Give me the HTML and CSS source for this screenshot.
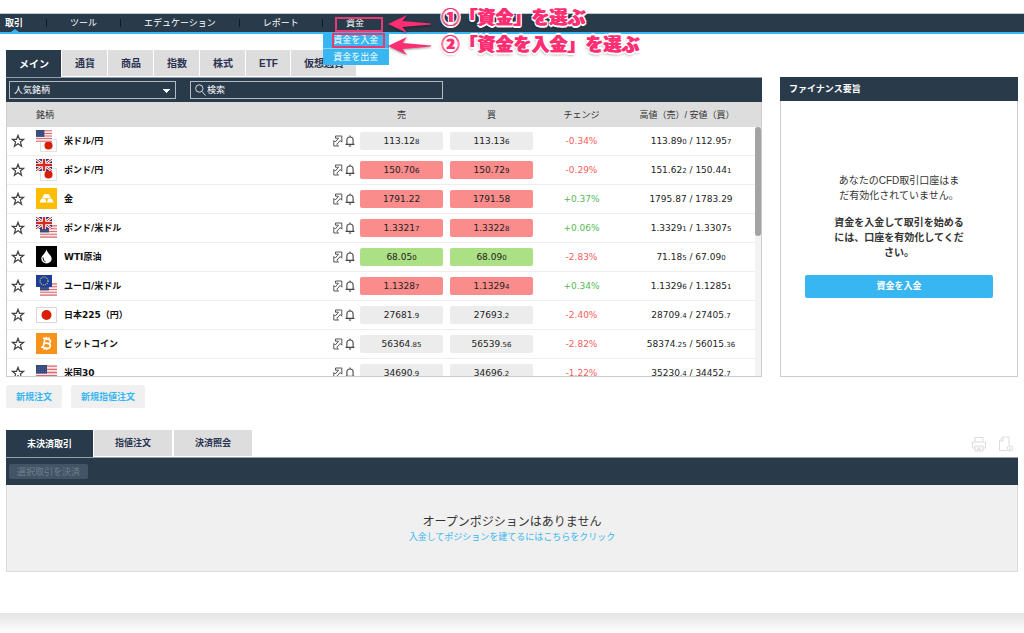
FILE: index.html
```
<!DOCTYPE html>
<html lang="ja">
<head>
<meta charset="utf-8">
<title>取引</title>
<link rel="stylesheet" href="styles.css">
</head>
<body>
<svg class="defs" aria-hidden="true">
  <defs>
    <symbol id="star" viewBox="0 0 14 14"><path d="M7 1.3 8.5 5.3H12.7L9.4 8 10.6 12.3 7 9.8 3.4 12.3 4.6 8 1.3 5.3H5.5Z" fill="none" stroke="#444" stroke-width="1.2"/></symbol>
    <symbol id="expand" viewBox="0 0 10 12"><path d="M2.500 1H8.800V7.200L7.200 5.500 3.800 9.400 5.500 11H.8V5.500L2.300 7 5.500 3.200H2.500Z" fill="none" stroke="#444" stroke-width=".9"/></symbol>
    <symbol id="bell" viewBox="0 0 10 12"><path d="M.6 9.4H9.4M1.9 9.2V5C1.9 1 8.1 1 8.1 5V9.2M5 .4V2M4 10.6Q5 11.8 6 10.6" fill="none" stroke="#444" stroke-width="1.1"/></symbol>
    <symbol id="us" viewBox="0 0 21 14" preserveAspectRatio="none"><path fill="#f8e8e8" d="M0 0h21v14H0z"/><path d="M0 1h21M0 4h21M0 7h21M0 10h21M0 13h21" stroke="#dc6b73" stroke-width="1.2"/><path fill="#34477c" d="M0 0h11v8H0z"/><path d="M1 2h10M1 4h10M1 6h10" stroke="#6d7ba4" stroke-width=".6" stroke-dasharray="1 1"/></symbol>
    <symbol id="jp" viewBox="0 0 21 16" preserveAspectRatio="none"><path fill="#fff" stroke="#d8d8d8" d="M.5.5h20v15H.5z"/><ellipse cx="10.5" cy="8" rx="5" ry="5" fill="#d81e05"/></symbol>
    <symbol id="uk" viewBox="0 0 16 12"><path fill="#252d83" d="M0 0h16v12H0z"/><path d="m0 0 16 12M16 0 0 12" stroke="#fff" stroke-width="2.8"/><path d="m0 0 16 12M16 0 0 12" stroke="#d52b1e" stroke-width="1"/><path d="M8 0v12M0 6h16" stroke="#fff" stroke-width="4.2"/><path d="M8 0v12M0 6h16" stroke="#d52b1e" stroke-width="2.4"/></symbol>
    <symbol id="eu" viewBox="0 0 16 12"><path fill="#1c3d9c" d="M0 0h16v12H0z"/><circle cx="8" cy="6" r="4" fill="none" stroke="#d8ce45" stroke-width="1.2" stroke-dasharray="1.1 1"/></symbol>
    <symbol id="f-usdjpy" viewBox="0 0 21 22"><use href="#jp" x="4" y="9" width="17" height="13"/><use href="#us" width="16" height="12"/></symbol>
    <symbol id="f-gbpjpy" viewBox="0 0 21 22"><use href="#jp" x="4" y="9" width="17" height="13"/><use href="#uk" width="16" height="12"/></symbol>
    <symbol id="f-gbpusd" viewBox="0 0 21 22"><use href="#us" x="4" y="8" width="17" height="13"/><use href="#uk" width="16" height="12"/></symbol>
    <symbol id="f-eurusd" viewBox="0 0 21 22"><use href="#us" x="4" y="8" width="17" height="13"/><use href="#eu" width="16" height="12"/></symbol>
    <symbol id="f-gold" viewBox="0 0 21 22"><path fill="#fdbd04" d="M0 0h21v21H0z"/><path d="M8 6.2h5l2 4H6.200zM5.200 10.800h4l1.500 3.700H3.500zM12 10.800h4l1.600 3.700h-6.600z" fill="#fff"/></symbol>
    <symbol id="f-oil" viewBox="0 0 21 22"><path d="M0 0h21v21H0z"/><path d="M10.500 3.500C9.700 7 5.300 9.500 5.300 12.800a5.200 4.700 0 0 0 10.400 0C15.700 9.500 11.300 7 10.500 3.500z" fill="#fff"/><path d="M7 11.500q-.3 3.500 2.500 4.300" fill="none" stroke="#000" stroke-width="1"/></symbol>
    <symbol id="f-jp" viewBox="0 0 21 22"><use href="#jp" y="3" width="21" height="16"/></symbol>
    <symbol id="f-us" viewBox="0 0 21 22"><use href="#us" y="3" width="21" height="15"/></symbol>
    <symbol id="f-btc" viewBox="0 0 21 22"><path fill="#f7931a" d="M0 0h21v21H0z"/><g transform="rotate(12 10.500 10.500)"><path d="M6 6h5.500c3.300 0 3.300 4.200 0 4.200H8.500h3.500c3.700 0 3.700 4.800 0 4.800H6M8 6v9M9.300 4v2M11.800 4v2M9.300 15v2M11.800 15v2" fill="none" stroke="#fff" stroke-width="1.700"/></g></symbol>
  </defs>
</svg>

<nav class="nav">
  <ul class="nav-list">
    <li class="nav-item marked"><a href="#"><b>取引</b></a></li>
    <li class="nav-item"><a href="#">ツール</a></li>
    <li class="nav-item"><a href="#">エデュケーション</a></li>
    <li class="nav-item"><a href="#">レポート</a></li>
    <li class="nav-item marked funds"><a href="#">資金</a>
      <ul class="submenu">
        <li><a href="#">資金を入金</a></li>
        <li><a href="#">資金を出金</a></li>
      </ul>
    </li>
  </ul>
</nav>

<main>
  <div class="top">
    <section class="market">
      <div class="tabs">
        <button class="tab active">メイン</button>
        <button class="tab">通貨</button>
        <button class="tab">商品</button>
        <button class="tab">指数</button>
        <button class="tab">株式</button>
        <button class="tab">ETF</button>
        <button class="tab">仮想通貨</button>
      </div>
      <div class="toolbar">
        <select class="field picker" aria-label="銘柄グループ"><option>人気銘柄</option></select>
        <label class="field search">
          <svg width="11" height="12" viewBox="0 0 11 12"><path d="M7 7.500 10.500 11.500M8 4.500a3.700 3.700 0 1 1-7.400 0a3.700 3.700 0 0 1 7.400 0z" fill="none" stroke="#d5dade" stroke-width="1"/></svg>
          <input type="text" placeholder="検索" aria-label="検索">
        </label>
      </div>
      <div class="quotes">
        <table>
          <colgroup><col class="c-star"><col class="c-flag"><col><col class="c-tools"><col class="c-price"><col class="c-price"><col class="c-change"><col class="c-range"></colgroup>
          <thead><tr><th></th><th class="left" colspan="2">銘柄</th><th></th><th class="price">売</th><th class="price">買</th><th>チェンジ</th><th class="range">高値（売）/ 安値（買）</th></tr></thead>
          <tbody id="rows"></tbody>
        </table>
        <span class="scrollbar"><span class="thumb"></span></span>
      </div>
    </section>

    <aside class="finance">
      <h2>ファイナンス要旨</h2>
      <div class="finance-body">
        <p class="notice">あなたのCFD取引口座はまだ有効化されていません。</p>
        <p class="prompt">資金を入金して取引を始めるには、口座を有効化してください。</p>
        <button class="deposit">資金を入金</button>
      </div>
    </aside>
  </div>

  <div class="orders">
    <button>新規注文</button>
    <button>新規指値注文</button>
  </div>

  <section class="positions">
    <div class="positions-head">
      <div class="tabs small">
        <button class="tab active">未決済取引</button>
        <button class="tab">指値注文</button>
        <button class="tab">決済照会</button>
      </div>
      <div class="exports">
        <button aria-label="印刷"><svg width="16" height="16" viewBox="0 0 16 16"><path d="M4 6V1.500h8V6M4 12H1.500V6h13v6H12M4 10h8v5H4zM6 12h4M6 13.500h4" fill="none" stroke="#dcdcdc"/></svg></button>
        <button aria-label="書き出し"><svg width="16" height="16" viewBox="0 0 16 16"><path d="M11 9V1H5L1.500 5v9.500H8.500M5 1v4H1.500" fill="none" stroke="#dcdcdc"/><circle cx="12" cy="12.500" r="2.800" fill="#fff" stroke="#dcdcdc"/><path d="M12 11v3M11 13l1 1 1-1" fill="none" stroke="#dcdcdc"/></svg></button>
      </div>
    </div>
    <div class="positions-bar"><button disabled>選択取引を決済</button></div>
    <div class="empty">
      <p>オープンポジションはありません</p>
      <a href="#">入金してポジションを建てるにはこちらをクリック</a>
    </div>
  </section>
</main>
<footer class="footer"></footer>

<div class="notes">
  <span class="frame frame-1"></span>
  <span class="frame frame-2"></span>
  <svg class="arrow arrow-1" width="44" height="20" viewBox="0 0 44 20"><path d="M0 10 19 1 14.500 7 43 9.500V10.500L14.500 13 19 19Z"/></svg>
  <svg class="arrow arrow-2" width="44" height="20" viewBox="0 0 44 20"><path d="M0 10 19 1 14.500 7 43 9.500V10.500L14.500 13 19 19Z"/></svg>
  <span class="step step-1">①「資金」を選ぶ</span>
  <span class="step step-2">②「資金を入金」を選ぶ</span>
</div>
<script src="quotes.js"></script>
</body>
</html>
```

FILE: styles.css
```
* { box-sizing: border-box; }
body {
  margin: 0;
  padding-top: 13px;
  background: #fff;
  color: #333;
  font-family: "Liberation Sans", "Noto Sans CJK JP", sans-serif;
  font-size: 9px;
  line-height: 12px;
}
button, input, select { font: inherit; color: inherit; border: 0; padding: 0; margin: 0; }
button { cursor: pointer; }
a { color: inherit; text-decoration: none; }
ul { list-style: none; margin: 0; padding: 0; }
p, h2 { margin: 0; }
.defs { position: absolute; width: 0; height: 0; }

.nav {
  background: #293a4b;
  border-top: 1px solid #c4c9cc;
  border-bottom: 2px solid #38b6f1;
  color: #fff;
}
.nav-list { display: flex; }
.nav-item {
  position: relative;
  display: flex;
  align-items: center;
  height: 18px;
}
.nav-item > a { padding: 0 23px; }
.nav-item:first-child > a { padding-left: 5px; }
.nav-item + .nav-item::before { content: ""; width: 1px; height: 8px; background: #101a24; }
.marked::after {
  content: "";
  position: absolute;
  bottom: 0;
  left: 11px;
  border: 4px solid transparent;
  border-top: 0;
  border-bottom: 3px solid #38b6f1;
}
.funds::after { left: 32px; }
.submenu {
  position: absolute;
  z-index: 2;
  top: 18px;
  left: 1px;
  width: 66px;
  background: #38b6f1;
  text-align: center;
}
.submenu li { padding: 2px 0; }
.submenu li + li { border-top: 1px solid #8bd2f3; }

main { padding: 16px 6px 0; }
.top { display: grid; grid-template-columns: minmax(0, 1fr) 238px; gap: 18px; }
.tabs { display: flex; align-items: flex-start; }
.tab {
  height: 26px;
  padding: 2px 12px 0 13px;
  background: #ddd;
  border-right: 1px solid #fff;
  color: #2a3352;
  font-size: 10px;
  font-weight: bold;
}
.tab.active { height: 27px; background: #293a4b; color: #fff; }
.toolbar {
  display: flex;
  gap: 14px;
  padding: 3px;
  background: #293a4b;
  border-top: 1px solid #94a0aa;
}
.field {
  height: 18px;
  border: 1px solid #b3bac1;
  background: #293a4b;
  color: #fff;
}
.picker {
  width: 167px;
  padding: 0 4px;
  appearance: none;
  border-radius: 0;
  background-image: conic-gradient(from 315deg at 50% 100%, #fff 90deg, transparent 0);
  background-repeat: no-repeat;
  background-position: right 5px top 7px;
  background-size: 7px 4px;
}
.search { display: flex; align-items: center; gap: 1px; width: 253px; padding: 0 4px; }
.search input { flex: 1; min-width: 0; background: none; outline: 0; }
.search input::placeholder { color: #fff; opacity: 1; }

.quotes {
  position: relative;
  height: 275px;
  overflow: hidden;
  border: 1px solid #ccc;
  border-top: 0;
}
table { width: 100%; table-layout: fixed; border-collapse: separate; border-spacing: 0; }
.c-star { width: 22px; }
.c-flag { width: 35px; }
.c-tools { width: 29px; }
.c-price { width: 90px; }
.c-change { width: 83px; }
.c-range { width: 138px; }
th { height: 25px; padding: 0; background: #ddd; font-weight: normal; }
td { height: 29px; padding: 0; border-bottom: 1px solid #eee; text-align: center; }
th.left { padding-left: 7px; text-align: left; }
th.price, td.price { padding-right: 7px; }
th.range { padding-right: 10px; white-space: nowrap; }
td svg, td button { display: block; }
td.flag { padding-left: 7px; }
.star { margin: 0 auto; background: none; }
.name { color: #111; font-family: "DejaVu Sans", "Noto Sans CJK JP", sans-serif; font-weight: bold; text-align: left; }
.tools { display: flex; gap: 2px; padding-left: 2px; }
.tools button { background: none; }
.quote, td.change, td.range { font-family: "DejaVu Sans", sans-serif; }
td.range { padding-right: 2px; color: #222; }
.quote { width: 100%; height: 18px; border-radius: 2px; background: #ececec; color: #222; }
.quote.down { background: #fa8c8c; }
.quote.up { background: #abe084; }
small { font-size: 7px; }
.neg { color: #fb5c5c; }
.pos { color: #55b955; }
.scrollbar { position: absolute; top: 25px; right: 0; bottom: 0; width: 6px; background: #f3f3f3; }
.thumb { display: block; height: 109px; border-radius: 3px; background: #a3a3a3; }

.finance { display: flex; flex-direction: column; margin-top: 27px; border: 1px solid #ccc; border-top: 0; }
.finance h2 {
  margin: 0 -1px;
  padding: 6px 9px;
  background: #293a4b;
  color: #fff;
  font-size: 9px;
  line-height: 12px;
}
.finance-body { padding: 72px 24px 0; text-align: center; font-size: 10px; line-height: 15px; }
.notice { width: 126px; margin: 0 auto 12px; }
.prompt { width: 132px; margin: 0 auto 15px; font-weight: bold; }
.deposit {
  display: block;
  width: 100%;
  height: 23px;
  border-radius: 2px;
  background: #38b6f1;
  color: #fff;
  font-size: 9px;
  font-weight: bold;
}

.orders { display: flex; gap: 9px; margin-top: 8px; }
.orders button {
  height: 23px;
  padding: 0 10px;
  border-radius: 2px;
  background: #f0f0f0;
  color: #38b6f1;
  font-weight: bold;
}
.positions { margin-top: 22px; }
.positions-head { display: flex; justify-content: space-between; }
.small .tab { padding: 0 21px; border-right-width: 2px; font-size: 9px; }
.small .tab.active { border-right-width: 1px; }
.exports { display: flex; gap: 11px; padding: 6px 4px 0 0; }
.exports button { height: 16px; background: none; }
.positions-bar { padding: 6px 3px; background: #293a4b; border-top: 1px solid #94a0aa; }
.positions-bar button {
  display: block;
  height: 15px;
  padding: 0 8px;
  border-radius: 2px;
  background: #435466;
  color: #6f7f8d;
}
.empty {
  padding: 28px 0;
  border: 1px solid #ddd;
  border-top: 0;
  background: #f0f0f0;
  text-align: center;
}
.empty p { font-size: 12px; line-height: 18px; }
.empty a { color: #38b6f1; }
.footer { height: 20px; margin-top: 41px; background: linear-gradient(#e4e4e4, #fff); }

.notes { position: absolute; z-index: 3; top: 0; left: 0; pointer-events: none; }
.frame { position: absolute; border: 2px solid #e83a72; }
.frame-1 { top: 17px; left: 335px; width: 48px; height: 15px; }
.frame-2 { top: 33px; left: 332px; width: 53px; height: 15px; }
.arrow { position: absolute; fill: #ff2d72; filter: drop-shadow(0 1px 1px #0006); }
.arrow-1 { top: 14px; left: 388px; }
.arrow-2 { top: 36px; left: 388px; }
.step {
  position: absolute;
  left: 441px;
  color: #ff2d72;
  font: 900 18px/24px "Noto Sans CJK JP", sans-serif;
  white-space: nowrap;
  text-shadow:
    1px 0 0 #ff2d72,
    2px 1px 0 #fff, -1px -1px 0 #fff, 2px -1px 0 #fff, -1px 1px 0 #fff,
    0 2px 0 #fff, 1px 2px 0 #fff, 0 -2px 0 #fff, 1px -2px 0 #fff,
    0 2px 3px #0009;
}
.step-1 { top: 4px; }
.step-2 { top: 31px; }
```

FILE: quotes.js
```
// flag, name, direction, sell, buy, change, high, low; "_" starts the small digits
const quotes = [
  ["usdjpy", "米ドル/円", "", "113.12_8", "113.13_6", "-0.34%", "113.89_0", "112.95_7"],
  ["gbpjpy", "ポンド/円", "down", "150.70_6", "150.72_9", "-0.29%", "151.62_2", "150.44_1"],
  ["gold", "金", "down", "1791.22", "1791.58", "+0.37%", "1795.87", "1783.29"],
  ["gbpusd", "ポンド/米ドル", "down", "1.3321_7", "1.3322_8", "+0.06%", "1.3329_1", "1.3307_5"],
  ["oil", "WTI原油", "up", "68.05_0", "68.09_0", "-2.83%", "71.18_5", "67.09_0"],
  ["eurusd", "ユーロ/米ドル", "down", "1.1328_7", "1.1329_4", "+0.34%", "1.1329_6", "1.1285_1"],
  ["jp", "日本225（円）", "", "27681_.9", "27693_.2", "-2.40%", "28709_.4", "27405_.7"],
  ["btc", "ビットコイン", "", "56364_.85", "56539_.56", "-2.82%", "58374_.25", "56015_.36"],
  ["us", "米国30", "", "34690_.9", "34696_.2", "-1.22%", "35230_.4", "34452_.7"]
];
const price = value => {
  const [main, minor] = value.split("_");
  return minor ? `${main}<small>${minor}</small>` : main;
};
const icon = (id, w, h) => `<svg width="${w}" height="${h}"><use href="#${id}"/></svg>`;
document.getElementById("rows").innerHTML = quotes.map(([flag, name, dir, sell, buy, change, high, low]) => `
  <tr>
    <td><button class="star" aria-label="お気に入り">${icon("star", 14, 14)}</button></td>
    <td class="flag">${icon("f-" + flag, 21, 22)}</td>
    <td class="name">${name}</td>
    <td><div class="tools"><button aria-label="詳細">${icon("expand", 10, 12)}</button><button aria-label="アラート">${icon("bell", 10, 12)}</button></div></td>
    <td class="price"><button class="quote ${dir}">${price(sell)}</button></td>
    <td class="price"><button class="quote ${dir}">${price(buy)}</button></td>
    <td class="change ${change[0] === "-" ? "neg" : "pos"}">${change}</td>
    <td class="range">${price(high)} / ${price(low)}</td>
  </tr>`).join("");
```
